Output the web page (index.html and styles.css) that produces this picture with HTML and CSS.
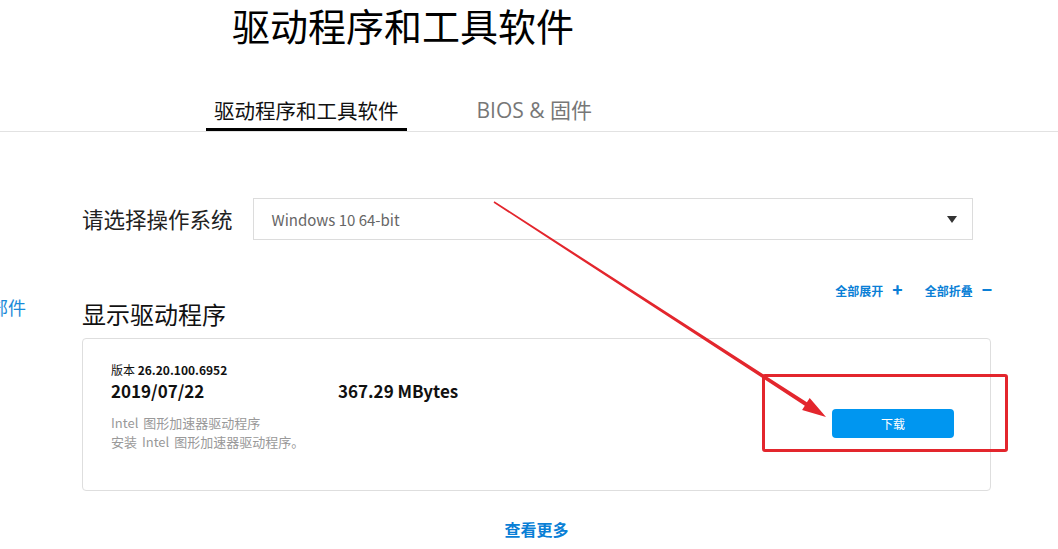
FILE: index.html
```html
<!DOCTYPE html>
<html>
<head>
<meta http-equiv="Content-Type" content="text/html; charset=utf-8">
<title>驱动程序和工具软件</title>
<link rel="stylesheet" href="styles.css">
</head>

<body>

<h1 class="page__title">驱动程序和工具软件</h1>

<nav class="tabs">
  <a class="tabs__item tabs__item--active">驱动程序和工具软件</a>
  <a class="tabs__item tabs__item--latin">BIOS &amp; 固件</a>
</nav>

<div class="layout">
  <aside class="side">
    <a class="side__link">显示部件</a>
  </aside>

  <main class="main">
    <div class="os">
      <p class="os__label">请选择操作系统</p>
      <div class="os__select">
        <span>Windows 10 64-bit</span>
        <i class="os__caret"></i>
      </div>
    </div>

    <div class="toggles">
      <a class="toggles__a">全部展开<b>+</b></a>
      <a class="toggles__a">全部折叠<b>&minus;</b></a>
    </div>

    <h2 class="group__title">显示驱动程序</h2>

    <div class="driver">
      <div class="driver__info">
        <p class="driver__ver">版本 <strong>26.20.100.6952</strong></p>
        <div class="driver__meta">
          <span>2019/07/22</span>
          <span>367.29 MBytes</span>
        </div>
        <p class="driver__desc">Intel 图形加速器驱动程序</p>
        <p class="driver__desc">安装 Intel 图形加速器驱动程序。</p>
      </div>
      <a class="driver__btn">下载</a>
    </div>

    <a class="more">查看更多</a>
  </main>
</div>

<!-- annotation layer -->
<svg class="mark" width="1058" height="549" viewBox="0 0 1058 549">
  <polygon fill="#e3262d" points="494.4,201.3 806.9,402.3 809.7,398.1 826,417 802.1,409.9 804.8,405.7 493.6,202.7"/>
  <rect x="763.5" y="375.5" width="243" height="75" rx="1.5" fill="none" stroke="#e3262d" stroke-width="3"/>
</svg>

</body>
</html>
```

FILE: styles.css
```css
/* reset */
div,ul,li,h1,h2,p,nav,main,aside{margin:0;padding:0}
a{text-decoration:none;cursor:pointer}

html,body{font-family:"Noto Sans CJK SC","Noto Sans",sans-serif;font-size:16px;color:#111;}
body{margin:0;position:relative;inline-size:1058px;block-size:549px;overflow:hidden;background:#fff;}

/* header */
.page__title{font-size:38px;line-height:50px;font-weight:400;padding-left:232px;color:#000;}

.tabs{display:flex;gap:63px;margin-top:42px;padding-left:206px;border-bottom:1px solid #e2e2e2;}
.tabs__item{font-size:20.5px;line-height:36px;padding:0 8px;color:#777;border-bottom:3px solid transparent;}
.tabs__item--active{color:#111;border-bottom-color:#000;}
.tabs__item--latin{font-family:"Open Sans","Noto Sans CJK SC",sans-serif;font-size:21px;margin-left:-1px;}

/* body */
.layout{display:flex;}
.side{inline-size:26px;display:flex;justify-content:flex-end;padding-top:163px;}
.side__link{font-size:18px;line-height:24px;color:#1a8ad8;white-space:nowrap;}

.main{inline-size:910px;margin-left:56px;}

.os{display:flex;align-items:center;gap:20px;margin-top:66px;}
.os__label{font-size:21.5px;line-height:42px;color:#222;}
.os__select{inline-size:720px;block-size:42px;box-sizing:border-box;border:1px solid #dcdcdc;display:flex;align-items:center;justify-content:space-between;padding:0 15px 0 18px;font-size:15px;color:#666;}
.os__caret{inline-size:0;block-size:0;border-left:5px solid transparent;border-right:5px solid transparent;border-top:7px solid #333;}

.toggles{display:flex;justify-content:flex-end;gap:22px;margin-top:40px;}
.toggles__a{font-size:12px;line-height:18px;font-weight:700;color:#0a7fd6;}
.toggles__a b{font-size:17px;margin-left:9px;}

.group__title{font-size:24px;line-height:28px;font-weight:400;color:#111;}

.driver{display:flex;justify-content:space-between;align-items:flex-start;margin-top:10px;inline-size:909px;box-sizing:border-box;border:1px solid #dedede;border-radius:4px;padding:22px 36px 39px 28px;}
.driver__ver{font-size:12px;line-height:18px;color:#111;}
.driver__ver strong{font-weight:700;}
.driver__meta{display:grid;grid-template-columns:227px auto;font-size:17px;line-height:24px;font-weight:700;color:#111;margin-bottom:10px;}
.driver__desc{font-size:13px;line-height:19px;color:#999;word-spacing:2px;}
.driver__btn{margin-top:48px;inline-size:122px;block-size:29px;line-height:29px;text-align:center;background:#0096f0;color:#fff;font-size:12px;border-radius:4px;}

.more{display:block;text-align:center;inline-size:909px;margin-top:26px;font-size:16px;line-height:24px;font-weight:700;color:#0a7fd6;}

/* annotation */
.mark{position:absolute;left:0;top:0;pointer-events:none;}
```
